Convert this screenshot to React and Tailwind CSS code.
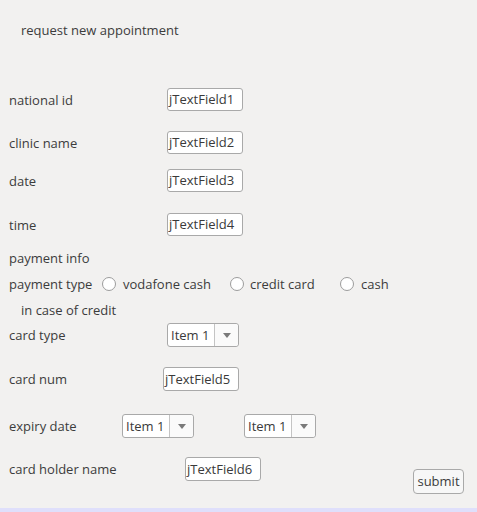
import React from "react";

const font = { fontFamily: '"Open Sans", "Noto Sans", sans-serif' };

function Field({ text, h = "h-[23px]" }) {
  return (
    <div className={`w-[76px] ${h} bg-white border border-[#a9a9a9] rounded-[3px] flex items-center pl-[1px] pt-[1px] text-[13px] text-[#3a3a3a] overflow-hidden whitespace-nowrap`}>
      {text}
    </div>
  );
}

function Combo() {
  return (
    <div className="w-[72px] h-[24px] bg-white border border-[#a9a9a9] rounded-[3px] flex text-[13px] text-[#3a3a3a]">
      <div className="w-[47px] flex items-center pl-[3px] pt-[1px] border-r border-[#c4c4c4]">Item 1</div>
      <div className="flex-1 flex items-center justify-center bg-[#fafafa] rounded-r-[3px]">
        <svg width="8" height="5" viewBox="0 0 8 5"><polygon points="0,0 8,0 4,5" fill="#7a7a7a" /></svg>
      </div>
    </div>
  );
}

function Radio() {
  return <div className="w-[14px] h-[14px] rounded-full border border-[#9c9c9c] bg-white shrink-0" />;
}

export default function App() {
  return (
    <div style={font} className="w-[477px] h-[512px] bg-[#f2f1f0] text-[13px] text-[#3c3c3c] flex flex-col overflow-hidden">
      <div className="h-[508px] flex flex-col pl-[9px]">
        <div className="mt-[21px] h-[18px] flex items-center pl-[12px] pt-[2px]">request new appointment</div>

        <div className="mt-[49px] flex items-center">
          <div className="w-[158px] pt-[2px]">national id</div>
          <Field text="jTextField1" />
        </div>
        <div className="mt-[20px] flex items-center">
          <div className="w-[158px] pt-[2px]">clinic name</div>
          <Field text="jTextField2" />
        </div>
        <div className="mt-[15px] flex items-center">
          <div className="w-[158px] pt-[2px]">date</div>
          <Field text="jTextField3" />
        </div>
        <div className="mt-[21px] flex items-center">
          <div className="w-[158px] pt-[2px]">time</div>
          <Field text="jTextField4" />
        </div>

        <div className="mt-[13px] h-[18px] flex items-center pt-[2px]">payment info</div>

        <div className="mt-[8px] h-[18px] flex items-center">
          <div className="w-[93px] whitespace-nowrap pt-[2px]">payment type</div>
          <Radio />
          <div className="ml-[7px] w-[107px] whitespace-nowrap pt-[2px]">vodafone cash</div>
          <Radio />
          <div className="ml-[6px] w-[90px] whitespace-nowrap pt-[2px]">credit card</div>
          <Radio />
          <div className="ml-[7px] whitespace-nowrap pt-[2px]">cash</div>
        </div>

        <div className="mt-[8px] h-[18px] flex items-center pl-[12px] pt-[2px]">in case of credit</div>

        <div className="mt-[4px] flex items-center">
          <div className="w-[158px] pt-[2px]">card type</div>
          <Combo />
        </div>

        <div className="mt-[20px] flex items-center">
          <div className="w-[154px] pt-[2px]">card num</div>
          <Field text="jTextField5" h="h-[24px]" />
        </div>

        <div className="mt-[23px] flex items-center">
          <div className="w-[113px] pt-[2px]">expiry date</div>
          <Combo />
          <div className="ml-[50px]">
            <Combo />
          </div>
        </div>

        <div className="mt-[19px] flex items-start">
          <div className="w-[176px] h-[24px] flex items-center pt-[2px]">card holder name</div>
          <Field text="jTextField6" h="h-[24px]" />
          <button className="ml-[152px] mt-[12px] w-[51px] h-[25px] bg-[#f7f7f7] border border-[#a9a9a9] rounded-[4px] text-[13px] text-[#3c3c3c] flex items-center justify-center pt-[1px]">
            submit
          </button>
        </div>
      </div>
      <div className="flex-1 bg-[#dfdffb]" />
    </div>
  );
}
